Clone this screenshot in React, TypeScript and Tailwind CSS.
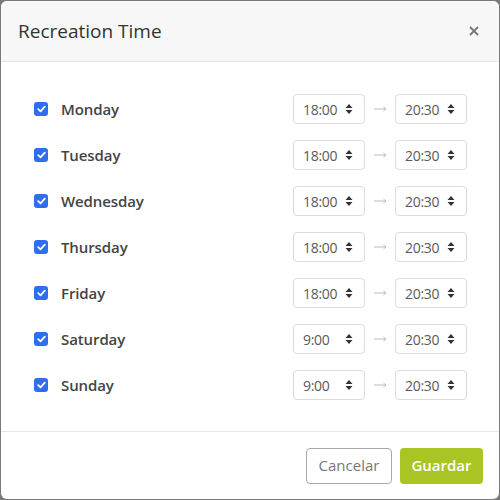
import React from "react";

const days = [
  { name: "Monday", from: "18:00", to: "20:30" },
  { name: "Tuesday", from: "18:00", to: "20:30" },
  { name: "Wednesday", from: "18:00", to: "20:30" },
  { name: "Thursday", from: "18:00", to: "20:30" },
  { name: "Friday", from: "18:00", to: "20:30" },
  { name: "Saturday", from: "9:00", to: "20:30" },
  { name: "Sunday", from: "9:00", to: "20:30" },
];

function Caret() {
  return (
    <svg width="8" height="12" viewBox="0 0 8 12" className="shrink-0">
      <path d="M4 1 L7.5 5 H0.5 Z" fill="#333" />
      <path d="M4 11 L7.5 7 H0.5 Z" fill="#333" />
    </svg>
  );
}

function TimeSelect({ value }: { value: string }) {
  return (
    <div className="flex h-[30px] w-[72px] items-center justify-between rounded-[4px] border border-[#dcdcdc] bg-white pl-[9px] pr-[11px] text-[14px] tracking-[-0.3px] text-[#5a5a5a]">
      <span>{value}</span>
      <Caret />
    </div>
  );
}

function Check() {
  return (
    <div className="flex h-[14px] w-[14px] items-center justify-center rounded-[3px] bg-[#2f6fef]">
      <svg width="9" height="8" viewBox="0 0 9 8">
        <path d="M1.2 4.2 L3.5 6.3 L7.8 1.6" stroke="#fff" strokeWidth="1.8" fill="none" strokeLinecap="round" strokeLinejoin="round" />
      </svg>
    </div>
  );
}

function Arrow() {
  return (
    <div className="flex w-[30px] items-center justify-center">
      <svg width="13" height="6" viewBox="0 0 13 6">
        <path d="M0 3 H12 M9.5 1 L12 3 L9.5 5" stroke="#bbb" strokeWidth="1" fill="none" />
      </svg>
    </div>
  );
}

export default function App() {
  return (
    <div className="h-[500px] w-[500px] bg-[#7a7a7a] p-px" style={{ fontFamily: '"Open Sans", "Noto Sans", sans-serif' }}>
      <div className="flex h-full w-full flex-col overflow-hidden rounded-[6px] bg-white">
        <div className="flex h-[61px] items-center justify-between border-b border-[#e6e6e6] bg-[#f7f7f7] pl-[17px] pr-[20px]">
          <h1 className="text-[19px] text-[#333]">Recreation Time</h1>
          <svg width="10" height="10" viewBox="0 0 10 10">
            <path d="M1 1 L9 9 M9 1 L1 9" stroke="#777" strokeWidth="1.8" />
          </svg>
        </div>

        <div className="flex flex-1 flex-col gap-[16px] pl-[33px] pr-[32px] pt-[32px]">
          {days.map((d) => (
            <div key={d.name} className="flex h-[30px] items-center">
              <Check />
              <span className="ml-[13px] flex-1 text-[15px] font-semibold tracking-[-0.1px] text-[#444]">{d.name}</span>
              <TimeSelect value={d.from} />
              <Arrow />
              <TimeSelect value={d.to} />
            </div>
          ))}
        </div>

        <div className="flex h-[68px] items-center justify-end gap-[8px] border-t border-[#e6e6e6] pr-[16px]">
          <button className="h-[36px] w-[86px] rounded-[4px] border border-[#a9a9a9] bg-white text-[15px] text-[#777]">Cancelar</button>
          <button className="h-[36px] w-[83px] rounded-[4px] bg-[#a8c524] text-[15px] font-semibold text-white">Guardar</button>
        </div>
      </div>
    </div>
  );
}
